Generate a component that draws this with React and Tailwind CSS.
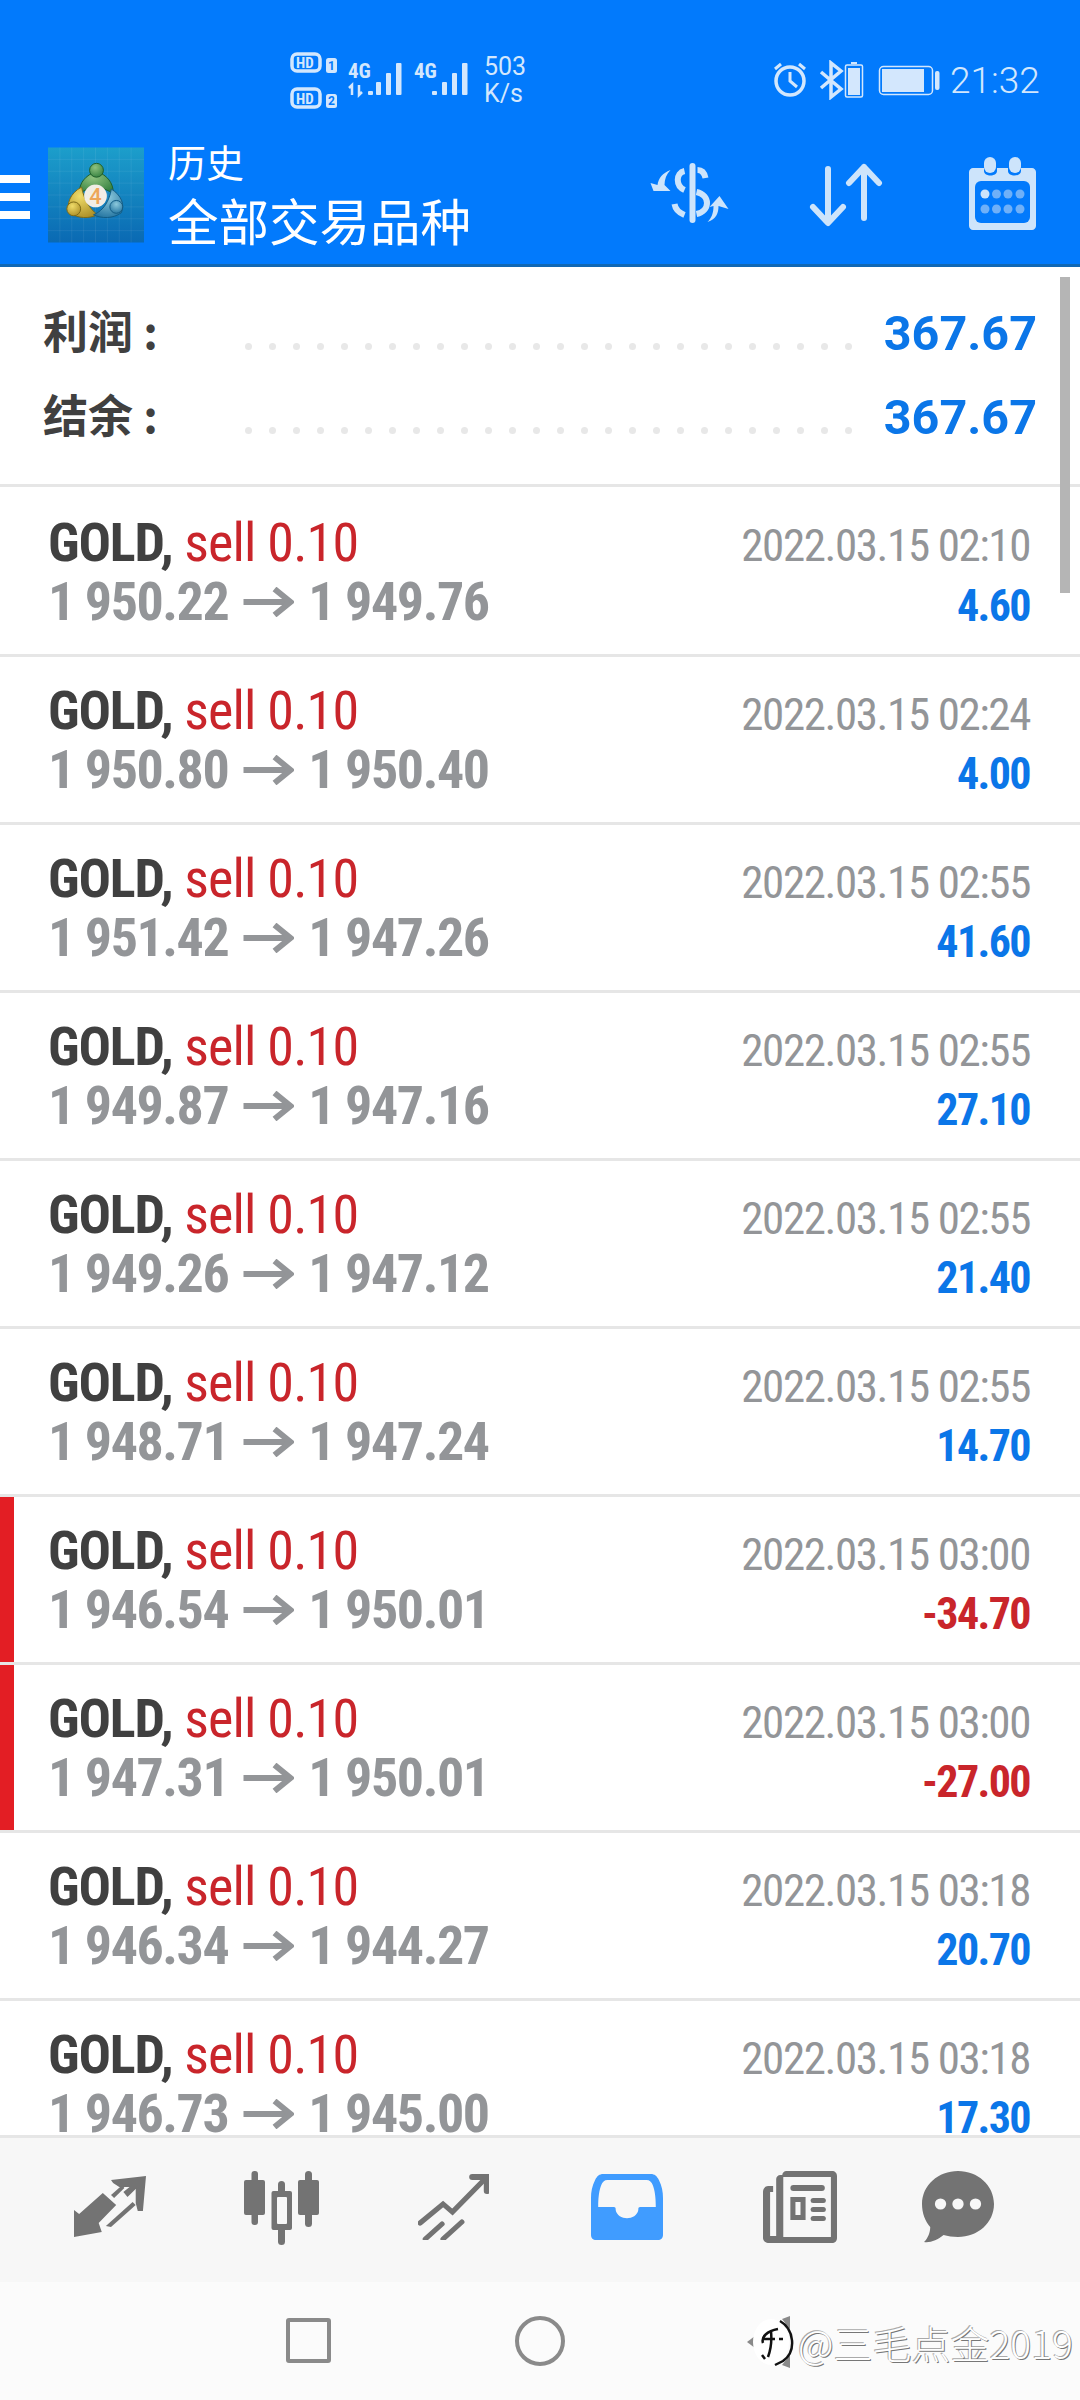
const rows = [
  ["1 950.22","1 949.76","2022.03.15 02:10","4.60"],
  ["1 950.80","1 950.40","2022.03.15 02:24","4.00"],
  ["1 951.42","1 947.26","2022.03.15 02:55","41.60"],
  ["1 949.87","1 947.16","2022.03.15 02:55","27.10"],
  ["1 949.26","1 947.12","2022.03.15 02:55","21.40"],
  ["1 948.71","1 947.24","2022.03.15 02:55","14.70"],
  ["1 946.54","1 950.01","2022.03.15 03:00","-34.70"],
  ["1 947.31","1 950.01","2022.03.15 03:00","-27.00"],
  ["1 946.34","1 944.27","2022.03.15 03:18","20.70"],
  ["1 946.73","1 945.00","2022.03.15 03:18","17.30"],
];

function Dots() {
  return (
    <div className="flex gap-[17px]">
      {Array.from({ length: 26 }).map((_, i) => (
        <span key={i} className="w-[7px] h-[7px] rounded-full bg-[#e8e8e8]" />
      ))}
    </div>
  );
}

function SummaryRow({ label, value }) {
  return (
    <div className="flex items-center h-[84px]">
      <span className="w-[245px] pl-[43px] mb-[6px] text-[45px] font-bold text-[#404040] whitespace-nowrap font-['Noto_Sans_CJK_SC',sans-serif]">{label}</span>
      <div className="mt-[26px]"><Dots /></div>
      <span className="ml-auto mr-[43px] mt-[3px] text-[48.5px] font-bold text-[#0b76e8] font-['Roboto',sans-serif]">{value}</span>
    </div>
  );
}

function Row({ r, first }) {
  const neg = r[3].startsWith("-");
  return (
    <div className={"flex border-b-[3px] border-[#e6e6e6] shrink-0 " + (first ? "h-[170px]" : "h-[168px]")}>
      <div className={"w-[14px] shrink-0 " + (neg ? "bg-[#e31e24]" : "")} />
      <div className={"flex flex-1 justify-between pl-[34px] pr-[50px] " + (first ? "pt-[26px]" : "pt-[24px]")}>
        <div className="font-['Roboto',sans-serif] [font-stretch:75%] whitespace-nowrap">
          <div className="text-[54px] leading-[60px]">
            <span className="font-bold text-[#404040] tracking-[-1.2px]">GOLD,</span>
            <span className="text-[#c9252b] font-normal tracking-[-0.8px]"> sell 0.10</span>
          </div>
          <div className="flex items-center text-[54px] leading-[58px] font-bold text-[#939598] tracking-[-1.45px]">
            <span>{r[0]}</span>
            <svg className="ml-[15px] mr-[14px]" width="51" height="30" viewBox="0 0 50 30" fill="none" stroke="#939598" strokeWidth="6">
              <path d="M0 15H47" />
              <path d="M31 2L47 15L31 28" />
            </svg>
            <span>{r[1]}</span>
          </div>
        </div>
        <div className={"text-right font-['Roboto',sans-serif] [font-stretch:75%] whitespace-nowrap " + (first ? "pt-[3px]" : "pt-[4px]")}>
          <div className="text-[45px] leading-[60px] text-[#939598] tracking-[-1.4px]">{r[2]}</div>
          <div className={"text-[44px] font-bold tracking-[-1.6px] " + (first ? "leading-[60px] " : "leading-[58px] ") + (neg ? "text-[#c9252b]" : "text-[#0b76e8]")}>{r[3]}</div>
        </div>
      </div>
    </div>
  );
}

function Logo() {
  const lines = [12, 24, 36, 48, 60, 72, 84];
  return (
    <svg className="ml-[18px]" width="96" height="96" viewBox="0 0 97 96">
      <defs>
        <linearGradient id="lg" x1="0" y1="0" x2="0" y2="1">
          <stop offset="0" stopColor="#1c9ecb" />
          <stop offset="1" stopColor="#0a69b3" />
        </linearGradient>
        <radialGradient id="gb" cx="0.4" cy="0.3" r="0.8">
          <stop offset="0" stopColor="#8fc27f" />
          <stop offset="1" stopColor="#2f7d3c" />
        </radialGradient>
        <radialGradient id="yb" cx="0.4" cy="0.3" r="0.8">
          <stop offset="0" stopColor="#f0dc6a" />
          <stop offset="1" stopColor="#a88a22" />
        </radialGradient>
        <radialGradient id="bb" cx="0.5" cy="0.3" r="0.8">
          <stop offset="0" stopColor="#8cc9dc" />
          <stop offset="1" stopColor="#1c6e9c" />
        </radialGradient>
      </defs>
      <rect width="97" height="96" fill="url(#lg)" />
      <g stroke="#ffffff" strokeOpacity="0.07" strokeWidth="1">
        {lines.map((v) => <path key={v} d={`M${v} 0V96M0 ${v}H97`} />)}
      </g>
      <path d="M49 24C38 28 31 36 32 46L48 38L66 46C66 36 60 28 49 24Z" fill="url(#gb)" stroke="#1f5f2b" strokeWidth="1" />
      <circle cx="49" cy="23" r="7" fill="url(#gb)" stroke="#1f5f2b" strokeWidth="1" />
      <path d="M34 40C22 46 18 58 22 66C30 72 42 72 50 68C42 62 36 52 34 40Z" fill="url(#yb)" stroke="#7d6a16" strokeWidth="1" />
      <circle cx="26" cy="62" r="7" fill="url(#yb)" stroke="#7d6a16" strokeWidth="1" />
      <path d="M64 42C74 48 78 58 74 66C66 72 54 72 46 68C56 64 62 54 64 42Z" fill="url(#bb)" stroke="#135c85" strokeWidth="1" />
      <circle cx="69" cy="60" r="6.5" fill="url(#bb)" stroke="#135c85" strokeWidth="1" />
      <circle cx="48" cy="49" r="11.5" fill="#f1ede6" />
      <text x="48" y="57" textAnchor="middle" fontSize="22" fontWeight="500" fill="#eda65a" fontFamily="Roboto, sans-serif">4</text>
    </svg>
  );
}

function StatusBar() {
  const c = "#d3e7fd";
  return (
    <div className="h-[134px] relative shrink-0">
      <svg className="absolute left-[288px] top-[50px]" width="184" height="62" viewBox="0 0 184 62" fill="none">
        <g stroke={c} strokeWidth="3.5">
          <rect x="4" y="4" width="28" height="17" rx="5" />
          <rect x="4" y="39" width="28" height="18" rx="5" />
        </g>
        <g fill={c} fontFamily="Roboto, sans-serif" fontWeight="700">
          <text x="8" y="18" fontSize="15" style={{ fontStretch: "75%" }}>HD</text>
          <text x="8" y="53.5" fontSize="15" style={{ fontStretch: "75%" }}>HD</text>
          <rect x="38" y="8" width="11" height="15" rx="2.5" />
          <rect x="38" y="44" width="11" height="14" rx="2.5" />
          <text x="60" y="28" fontSize="21" style={{ fontStretch: "75%" }}>4G</text>
          <text x="126" y="28" fontSize="21" style={{ fontStretch: "75%" }}>4G</text>
          <rect x="80" y="41" width="5" height="4" rx="1" />
          <rect x="88" y="32" width="5" height="13" rx="1" />
          <rect x="98" y="23" width="5" height="22" rx="1" />
          <rect x="108" y="13" width="5.5" height="32" rx="1" />
          <rect x="144" y="41" width="5" height="4" rx="1" />
          <rect x="154" y="32" width="5" height="13" rx="1" />
          <rect x="164" y="23" width="5" height="22" rx="1" />
          <rect x="174" y="13" width="5.5" height="32" rx="1" />
        </g>
        <path d="M64 45V35L61 38M71 35V45L74 42" stroke={c} strokeWidth="2.5" />
        <g fill="#027afc" fontFamily="Roboto, sans-serif" fontWeight="700" fontSize="12">
          <text x="40" y="20">1</text>
          <text x="40" y="55">2</text>
        </g>
      </svg>
      <div className="absolute left-[484px] top-[53px] text-[25px] leading-[27px] text-[#d3e7fd] font-['Roboto',sans-serif]">
        <div>503</div>
        <div>K/s</div>
      </div>
      <svg className="absolute left-[772px] top-[60px]" width="170" height="40" viewBox="0 0 170 40" fill="none" stroke={c}>
        <circle cx="18" cy="21" r="14" strokeWidth="3.5" />
        <path d="M18 12V21L25 27M3 9L9 4M33 9L27 4" strokeWidth="3" />
        <path d="M49 12L69 29L59 37V3L69 11L49 28" strokeWidth="3.5" />
        <rect x="73.5" y="5" width="17" height="32" rx="1.5" strokeWidth="1.5" />
        <rect x="76" y="8" width="12" height="27" fill={c} stroke="none" />
        <rect x="79" y="2" width="6" height="2" fill={c} stroke="none" />
        <rect x="107.5" y="6.5" width="53" height="28" rx="4" strokeWidth="1.5" />
        <rect x="110" y="9" width="42" height="23" fill={c} stroke="none" />
        <rect x="163" y="11" width="4.5" height="19" rx="2" fill={c} stroke="none" />
      </svg>
      <div className="absolute left-[950px] top-[56px] text-[37px] leading-[50px] font-light text-[#d3e7fd] font-['Roboto',sans-serif]">21:32</div>
    </div>
  );
}

export default function App() {
  return (
    <div className="w-[1080px] h-[2400px] flex flex-col relative overflow-hidden bg-white">
      <div className="h-[267px] shrink-0 flex flex-col bg-[#027afc] border-b-[3px] border-[#1168b4]">
        <StatusBar />
        <div className="flex items-start">
          <div className="w-[30px] mt-[41px] flex flex-col gap-[10px] shrink-0">
            <div className="h-[8px] bg-white" />
            <div className="h-[8px] bg-white" />
            <div className="h-[8px] bg-white" />
          </div>
          <div className="mt-[13px]"><Logo /></div>
          <div className="ml-[24px] text-white font-['Noto_Sans_CJK_SC',sans-serif] whitespace-nowrap">
            <div className="text-[38px] leading-[50px] mt-[2px]">历史</div>
            <div className="text-[50.5px] leading-[66px]">全部交易品种</div>
          </div>
          <div className="ml-auto flex items-start">
            <svg className="mt-[29px] mr-[80px]" width="79" height="60" viewBox="0 0 78 60" fill="#cde4fb">
              <rect x="39" y="0" width="6" height="60" rx="3" />
              <g fill="none" stroke="#cde4fb" strokeWidth="6">
                <path d="M34 8C25 10 25 23 34 27" />
                <path d="M47 7C51 7 54 10 55 15" />
                <path d="M46 29C60 32 60 48 46 51" />
                <path d="M24 41C25 47 29 50 34 52" />
              </g>
              <path d="M20 7C12 10 8 15 7 22L0 20L3 28L20 28L14 22C14 16 16 11 20 7Z" />
              <path d="M57 59C66 56 68 50 68 43L78 46L69 33L59 44L63 43C63 50 61 55 57 59Z" />
            </svg>
            <svg className="mt-[29px] mr-[85px]" width="74" height="64" viewBox="0 0 72 64" fill="none" stroke="#cde4fb" strokeWidth="6" strokeLinecap="round" strokeLinejoin="round">
              <path d="M18 6V59M3 44L18 60L33 44" />
              <path d="M54 4V55M39 20L54 4L69 20" />
            </svg>
            <svg className="mt-[23px] mr-[43px]" width="69" height="73" viewBox="0 0 67 73" fill="#cde4fb">
              <path d="M4 11H15V14C15 20 28 20 28 14V11H39V14C39 20 52 20 52 14V11H63C65 11 67 13 67 15V69C67 71 65 73 63 73H4C2 73 0 71 0 69V15C0 13 2 11 4 11Z" />
              <rect x="15" y="0" width="12" height="16" rx="6" />
              <rect x="40" y="0" width="12" height="16" rx="6" />
              <rect x="6" y="24" width="55" height="42" rx="6" fill="#027afc" />
              <circle cx="16" cy="37" r="4.5" fill="#cde4fb" />
              <g fill="#6fb0f8">
                <circle cx="27.5" cy="37" r="4.5" /><circle cx="39" cy="37" r="4.5" /><circle cx="51" cy="37" r="4.5" />
                <circle cx="16" cy="52" r="4.5" /><circle cx="27.5" cy="52" r="4.5" /><circle cx="39" cy="52" r="4.5" /><circle cx="51" cy="52" r="4.5" />
              </g>
            </svg>
          </div>
        </div>
      </div>

      <div className="absolute left-[1060px] top-[277px] w-[10px] h-[316px] bg-[#b5b5b5] z-10" />

      <div className="h-[220px] shrink-0 border-b-[3px] border-[#e6e6e6] pt-[24px]">
        <SummaryRow label="利润 :" value="367.67" />
        <SummaryRow label="结余 :" value="367.67" />
      </div>

      <div className="flex-1 min-h-0 overflow-hidden flex flex-col">
        {rows.map((r, i) => <Row key={i} r={r} first={i === 0} />)}
      </div>

      <div className="h-[147px] shrink-0 bg-[#f7f7f7] border-t-[3px] border-[#e6e6e6] relative">
        <div className="flex items-start h-full text-[#737373]">
          <svg className="ml-[74px] mt-[37px]" width="72" height="64" viewBox="0 0 70 64" fill="#737373" preserveAspectRatio="none">
            <path d="M0 35L5 39L28 18L41 30L24 48L27 57L0 62Z" />
            <path d="M36 5L70 1L67 36L62 36L60 28L60 14L52 22L48 17L54 12L44 12L38 8Z" fillRule="evenodd" />
            <path d="M31 51L57 27L60 30L36 52Z" />
            <path d="M36 20L47 10L49 13L39 23Z" />
          </svg>
          <svg className="ml-[98px] mt-[33px]" width="75" height="74" viewBox="0 0 75 74" fill="#737373">
            <rect x="7.5" y="0" width="6.5" height="54" rx="3" />
            <rect x="0" y="9" width="21" height="35" rx="2" />
            <rect x="34" y="10" width="7" height="64" rx="3.5" />
            <rect x="27.5" y="20" width="20.5" height="39" rx="2" />
            <rect x="33" y="26" width="10" height="27" fill="#f7f7f7" rx="1" />
            <rect x="61" y="0" width="7" height="56" rx="3.5" />
            <rect x="54" y="9" width="21" height="35" rx="2" />
          </svg>
          <svg className="ml-[99px] mt-[36px]" width="71" height="66" viewBox="0 0 68 66" fill="none" stroke="#737373" strokeWidth="5" strokeLinecap="round" preserveAspectRatio="none">
            <path d="M2 49L24 30L33 38L65 4" />
            <path d="M52 3H66V17" strokeWidth="6" />
            <path d="M7 65L23 50M24 65L42 48" />
          </svg>
          <svg className="ml-[102px] mt-[36px]" width="72" height="66" viewBox="0 0 70 66" fill="#409cff" preserveAspectRatio="none">
            <path d="M12 0H58C62 0 64 2 66 6C69 12 70 18 70 24V61C70 64 68 66 65 66H5C2 66 0 64 0 61V24C0 18 1 12 4 6C6 2 8 0 12 0ZM16 6C13 6 11 8 10 11C8 16 7 23 7 33H22C24 33 24 34 24 36C26 47 44 47 46 36C46 34 46 33 48 33H63C63 23 62 16 60 11C59 8 57 6 54 6Z" fillRule="evenodd" />
          </svg>
          <svg className="ml-[100px] mt-[33px]" width="74" height="72" viewBox="0 0 73 72" fill="#737373" preserveAspectRatio="none">
            <path d="M19 4C19 2 21 0 23 0H68C71 0 73 2 73 5V67C73 70 71 72 68 72H6C3 72 0 70 0 67V21C0 18 2 15 5 15H10V21H7V65H13V8C13 6 15 4 17 4ZM20 6V66H67V6Z" fillRule="evenodd" />
            <rect x="27" y="14" width="34" height="6" rx="3" />
            <path d="M27 26H42V49H27ZM32 31V44H37V31Z" fillRule="evenodd" />
            <rect x="47" y="27" width="15" height="5" rx="2.5" />
            <rect x="47" y="36" width="15" height="5" rx="2.5" />
            <rect x="47" y="45" width="15" height="5" rx="2.5" />
          </svg>
          <svg className="ml-[85px] mt-[33px]" width="72" height="72" viewBox="0 0 70 72" fill="#737373" preserveAspectRatio="none">
            <path d="M35 0C54 0 70 14 70 33C70 52 54 66 35 66C30 66 25 65 21 64C15 69 8 72 2 71C6 67 8 61 8 56C3 50 0 42 0 33C0 14 16 0 35 0Z" />
            <circle cx="18" cy="33" r="5.5" fill="#f7f7f7" />
            <circle cx="35" cy="33" r="5.5" fill="#f7f7f7" />
            <circle cx="52" cy="33" r="5.5" fill="#f7f7f7" />
          </svg>
        </div>
      </div>

      <div className="h-[118px] shrink-0 bg-[#fbfbfb] relative">
        <div className="flex items-start h-full">
          <div className="ml-[286px] mt-[36px] w-[45px] h-[45px] border-[4px] border-[#8a8a8a] rounded-[3px]" />
          <div className="ml-[184px] mt-[34px] w-[50px] h-[50px] border-[4px] border-[#8a8a8a] rounded-full" />
          <div className="ml-[182px] mt-[32px] flex items-center">
            <svg width="49" height="54" viewBox="0 0 49 54" fill="none">
              <path d="M0 27L8 21V33Z" fill="#8a8a8a" />
              <path d="M35 4L43 1V14ZM35 50L43 53V40Z" fill="#8a8a8a" />
              <ellipse cx="24" cy="27" rx="18" ry="23" fill="#ffffff" />
              <path d="M33 6C47 14 50 36 36 46L28 50M16 28C14 22 20 16 31 14M24 16C25 26 24 34 21 42M16 24H28M18 44L15 40M32 24H36" stroke="#111" strokeWidth="2.5" />
            </svg>
            <span className="ml-[2px] text-[39px] leading-[56px] font-light text-white whitespace-nowrap font-['Noto_Sans_CJK_SC',sans-serif] [text-shadow:1px_1px_0_#777,-1px_-1px_0_#aaa]">@三毛点金2019</span>
          </div>
        </div>
      </div>
    </div>
  );
}
